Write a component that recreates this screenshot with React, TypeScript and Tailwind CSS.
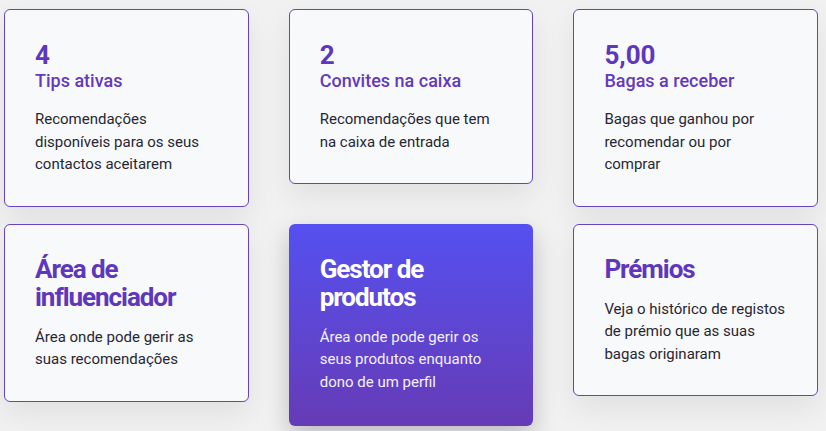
import React from 'react';

interface StatCard {
  value: string;
  label: string;
  text: string;
}

interface AreaCard {
  title: string;
  text: string;
  highlight?: boolean;
}

const STATS: StatCard[] = [
  { value: '4', label: 'Tips ativas', text: 'Recomendações disponíveis para os seus contactos aceitarem' },
  { value: '2', label: 'Convites na caixa', text: 'Recomendações que tem na caixa de entrada' },
  { value: '5,00', label: 'Bagas a receber', text: 'Bagas que ganhou por recomendar ou por comprar' },
];

const AREAS: AreaCard[] = [
  { title: 'Área de influenciador', text: 'Área onde pode gerir as suas recomendações' },
  { title: 'Gestor de produtos', text: 'Área onde pode gerir os seus produtos enquanto dono de um perfil', highlight: true },
  { title: 'Prémios', text: 'Veja o histórico de registos de prémio que as suas bagas originaram' },
];

const cardBase =
  'rounded-[6px] border border-[#6544c2] bg-[#f8f9fb] p-[30px] shadow-[0_12px_30px_rgba(0,0,0,0.07)]';

export default function App() {
  return (
    <div className="min-h-[431px] w-[826px] bg-[#f1f1f2] pl-[4px] pt-[9px] font-['Roboto',sans-serif]">
      <div className="grid grid-cols-[244.5px_244.5px_244.5px] items-start gap-x-[40.2px] gap-y-[17px]">
        {STATS.map((s) => (
          <div key={s.label} className={cardBase}>
            <div className="text-[26px] font-bold leading-[30px] text-[#5e37bd]">{s.value}</div>
            <div className="text-[18px] font-medium leading-[22px] text-[#6439bd]">{s.label}</div>
            <p className="mt-[16px] text-[15px] leading-[22.5px] text-[#272733]">{s.text}</p>
          </div>
        ))}

        {AREAS.map((a) =>
          a.highlight ? (
            <div
              key={a.title}
              className="rounded-[6px] bg-linear-to-b from-[#5450f0] to-[#653bb6] px-[31px] pb-[33px] pt-[31px] shadow-[0_10px_24px_rgba(0,0,0,0.22)]"
            >
              <h2 className="text-[26px] font-bold leading-[28px] tracking-[-0.04em] text-white">{a.title}</h2>
              <p className="mt-[15px] text-[15px] leading-[22.5px] text-[#f3f1ff]">{a.text}</p>
            </div>
          ) : (
            <div key={a.title} className={cardBase}>
              <h2 className="text-[26px] font-bold leading-[28px] tracking-[-0.04em] text-[#5e37bd]">{a.title}</h2>
              <p className="mt-[15px] text-[15px] leading-[22.5px] text-[#272733]">{a.text}</p>
            </div>
          )
        )}
      </div>
    </div>
  );
}
